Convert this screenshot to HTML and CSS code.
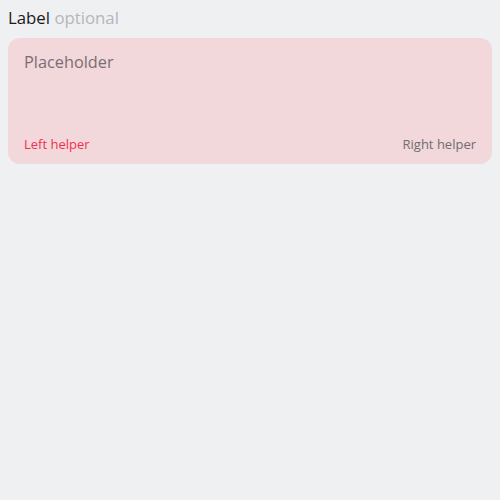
FILE: index.html
```html
<!DOCTYPE html>
<html>
<head>
<meta charset="utf-8">
<link rel="stylesheet" href="styles.css">
</head>
<body>
<div class="field">
  <div class="label">Label <span class="optional">optional</span></div>
  <div class="box">
    <div class="placeholder">Placeholder</div>
    <div class="helpers">
      <span class="helper-left">Left helper</span>
      <span class="helper-right">Right helper</span>
    </div>
  </div>
</div>
</body>
</html>
```
FILE: styles.css
```css
html, body {
  margin: 0;
  background: #eff0f2;
}
body {
  padding: 8px;
  font-family: "Open Sans", "DejaVu Sans", sans-serif;
}
.label {
  font-size: 16.8px;
  line-height: 20px;
  color: #19191a;
  height: 20px;
}
.optional {
  color: #b4b7bc;
}
.box {
  margin-top: 10px;
  background: #f2d7db;
  border-radius: 12px;
  padding: 12px 16px 12px;
  display: flex;
  flex-direction: column;
}
.placeholder {
  font-size: 16.3px;
  line-height: 24px;
  color: #7a6e72;
  height: 86px;
}
.helpers {
  display: flex;
  justify-content: space-between;
  font-size: 13px;
  line-height: 16px;
}
.helper-left {
  color: #f2314e;
}
.helper-right {
  color: #6f6d73;
}
```
